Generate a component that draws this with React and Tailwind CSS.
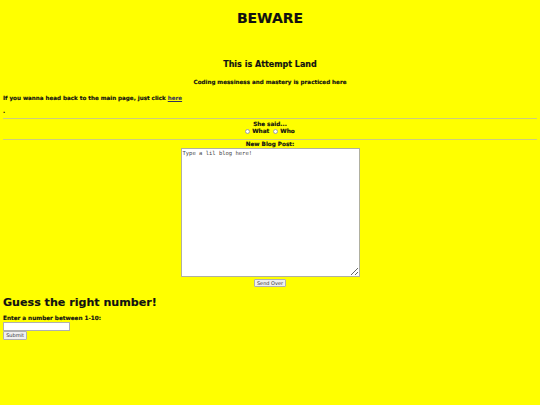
export default function App() {
  return (
    <div className="min-h-[405px] w-full bg-[#ffff00] px-[3px] font-['DejaVu_Sans',sans-serif] font-bold text-[#111] [-webkit-text-stroke:0.15px_#111]">
      <h1 className="pt-[11px] text-center text-[14px] leading-[14px]">BEWARE</h1>
      <h3 className="mt-[35px] text-center text-[8px] leading-[10px]">This is Attempt Land</h3>
      <h5 className="mt-[8px] text-center text-[5.6px] leading-[8px]">Coding messiness and mastery is practiced here</h5>
      <p className="mt-[8px] text-[5.6px] leading-[8px]">
        If you wanna head back to the main page, just click{" "}
        <a href="#" className="text-[#33335a] underline [-webkit-text-stroke:0.05px_#33335a]">here</a>
      </p>
      <p className="mt-[5px] text-[5.6px] leading-[8px]">.</p>
      <div className="mt-[3px] h-px bg-[#cccc80]" />
      <div className="mt-[2px] text-center text-[5.7px] leading-[7px]">She said...</div>
      <div className="flex h-[7px] items-center justify-center text-[5.8px] leading-[7px]">
        <span className="mr-[2px] inline-block h-[5px] w-[5px] rounded-full border border-[#a0a0a0] bg-white" />
        <span>What</span>
        <span className="ml-[4px] mr-[2px] inline-block h-[5px] w-[5px] rounded-full border border-[#a0a0a0] bg-white" />
        <span>Who</span>
      </div>
      <div className="mt-[4px] h-px bg-[#cccc80]" />
      <div className="mt-[1px] text-center text-[5.7px] leading-[7px]">New Blog Post:</div>
      <div className="flex flex-col items-center">
        <textarea
          className="h-[129px] w-[179px] resize border border-[#b0b0a0] bg-white px-[1px] py-[1px] font-['DejaVu_Sans_Mono',monospace] text-[5.5px] font-normal leading-[7px] text-[#444] outline-none [-webkit-text-stroke:0px]"
          defaultValue="Type a lil blog here!"
        />
        <button className="mt-[2px] h-[8px] w-[32px] rounded-[1px] border border-[#b0b0b0] bg-[#f0f0f0] font-['DejaVu_Sans',sans-serif] text-[5px] font-normal leading-[6px] text-[#333] [-webkit-text-stroke:0px]">
          Send Over
        </button>
      </div>
      <h2 className="mt-[10px] text-[11.1px] leading-[12px]">Guess the right number!</h2>
      <div className="mt-[6px] text-[5.7px] leading-[7px]">Enter a number between 1-10:</div>
      <input type="text" className="block h-[9px] w-[67px] border border-[#b0b0b0] bg-white outline-none" />
      <button className="block h-[9px] w-[24px] rounded-[1px] border border-[#b0b0b0] bg-[#f0f0f0] text-[5px] font-normal leading-[7px] text-[#333] [-webkit-text-stroke:0px]">
        Submit
      </button>
    </div>
  );
}
